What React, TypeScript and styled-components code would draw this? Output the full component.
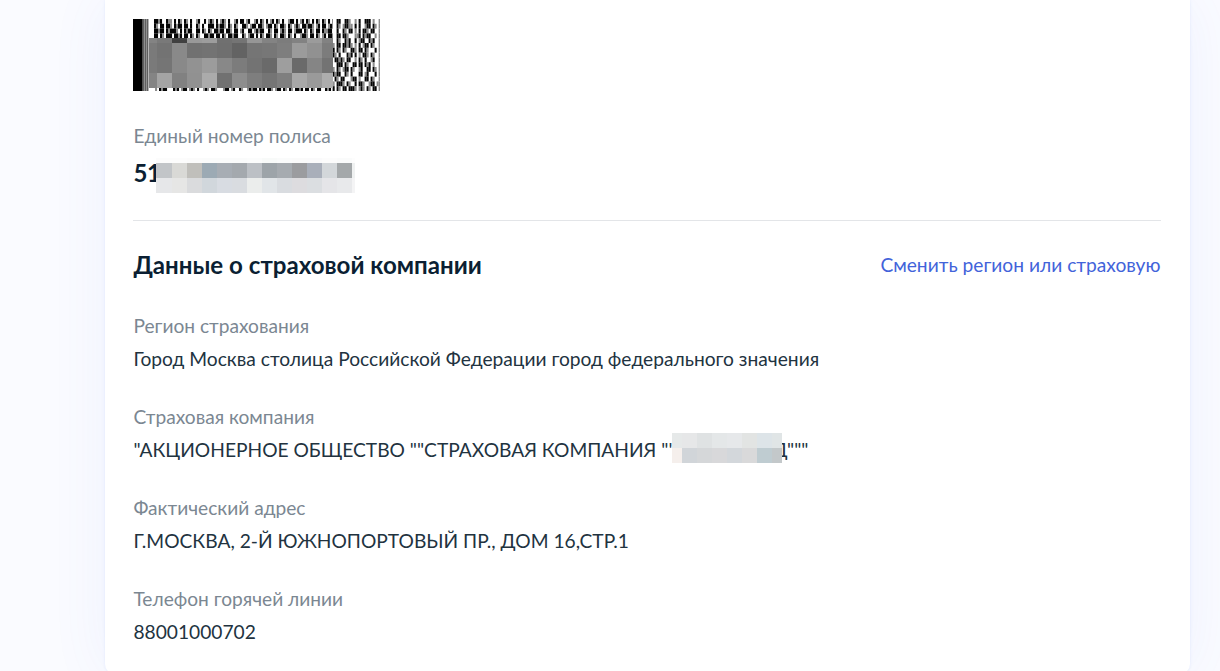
import styled, { createGlobalStyle } from 'styled-components';

const GlobalStyle = createGlobalStyle`
  * {
    box-sizing: border-box;
  }
  body {
    margin: 0;
    height: 671px;
    overflow: hidden;
    background: #fafbff;
    font-family: Lato, 'Open Sans', sans-serif;
    color: #0b1f33;
  }
`;

const Page = styled.main`
  height: 671px;
  padding: 0 30.5px 0 105px;
  overflow: hidden;
`;

const Card = styled.section`
  height: 674px;
  padding: 19px 29px 0 28.4px;
  background: #fff;
  border-radius: 0 0 10px 10px;
  box-shadow: 0 0 60px rgba(80, 120, 240, 0.07), 0 0 3px rgba(80, 120, 240, 0.12);
`;

const Barcode = styled.svg`
  display: block;
  width: 247px;
  height: 72px;
`;

const Label = styled.div`
  height: 24px;
  font-size: 19.15px;
  line-height: 24px;
  color: #7b8792;
  white-space: nowrap;
`;

const Value = styled.div`
  display: flex;
  height: 30px;
  margin-top: 6px;
  font-size: 19.2px;
  line-height: 30px;
  color: #22333f;
  white-space: pre;
`;

const Policy = styled.div`
  height: 130px;
  padding-top: 33px;
  border-bottom: 1px solid #e3e5e8;
`;

const PolicyNumber = styled.div`
  display: flex;
  height: 35px;
  margin-top: 10px;
  font-size: 24px;
  font-weight: 700;
  line-height: 30px;
`;

const PolicyDigits = styled.span`
  width: 22.6px;
  letter-spacing: -0.4px;
`;

const SectionHead = styled.header`
  display: flex;
  justify-content: space-between;
  align-items: center;
  height: 30px;
  margin: 29px 0 34px;
`;

const Title = styled.h2`
  margin: 0;
  font-size: 24.1px;
  font-weight: 700;
  line-height: 30px;
  white-space: nowrap;
`;

const ChangeLink = styled.a`
  font-size: 19.2px;
  line-height: 30px;
  color: #4263da;
  white-space: nowrap;
`;

const Field = styled.div`
  height: 91px;
`;

const Pixels = styled.svg<{ $top?: number; $left?: number }>`
  position: relative;
  z-index: 1;
  flex: none;
  display: block;
  margin-top: ${(props) => props.$top ?? 0}px;
  margin-left: ${(props) => props.$left ?? 0}px;
`;

// Left edge of every mosaic column inside the barcode, last one is the right edge
const CODE_COLS = [16, 24, 39, 54, 69, 84, 99, 114, 129, 144, 159, 174, 189, 200];
const CODE_ROWS = [19, 24, 39, 54, 69];
const CODE_TONES = [
  '83 79 40 99 9d 70 74 96 83 7c 82 9b 82',
  '7a 73 89 71 73 6f 63 75 77 7e 9b 91 7c',
  '7a 75 89 92 9c 88 7c 73 6a 9e 6a 85 73',
  '84 a4 81 91 ab 71 8d 7e 75 7f a8 9a ad',
].map((row) => row.split(' ').map((tone) => `#${tone}${tone}${tone}`));

const POLICY_COLS = [0, 16, 31, 46, 61, 76, 91, 106, 121, 136, 151, 166, 181, 196, 199];
const POLICY_ROWS = [0, 5, 20, 35];
const POLICY_TONES = [
  '#fcfcfc #fcfcfc #fbfbfb #fafbfb #fafbfb #fafbfb #fbfcfc #f8faf9 #fafbfb #fafafa #fafafb #fcfcfc #fafbfb #fdfdfd',
  '#c2c5c8 #d9d9d6 #c0bfbb #9caab4 #a7adb4 #a4a9ae #bcc0c5 #9da4a9 #a6abb0 #9b9c9f #a9afba #d3d7da #a4a8aa #eff1f1',
  '#e6e7e9 #e6e6e5 #dadbdd #d1d7dc #d8dce2 #d9dce0 #ebedec #e1e5e8 #d9dce0 #dddcdf #dbdee1 #e5e5e8 #e8e9eb #f4f4f5',
].map((row) => row.split(' '));

const COMPANY_COLS = [0, 10, 25, 40, 55, 70, 85, 100, 110];
const COMPANY_ROWS = [0, 15, 30];
const COMPANY_TONES = [
  '#e6e9e9 #e6e7e8 #dfe2e3 #e4e7e8 #e6e8ea #e2e4e3 #dde4e8 #e0e5e6',
  '#f5efec #d1d5d9 #d5d7d9 #d8d8da #d3d7db #d9d9da #bfccd1 #c3c8ca',
].map((row) => row.split(' '));

// Module rows, 2px per character: # is black, + is grey
const TOP_ROWS = [
  ' ##+#  #++ # #+ #+ #  +#  # +#+ # +#+ #  +# ## +#  +# #+ # +# #+ #  +## # +# #+ # #+ #+ # +# ',
  ' #+ ## ##+ #+## ## #  #+ #  ### #+##+ #+ #+  ##+ +## ##+ +## #+ ##+ #+ +#+ ##+##+ +# ## +#+ ',
  ' ##+## #+###+ # #+##  ## #+ #+ ##+## ##+ ## +#  ## +#+##  #+ ## +#+ ## +### #+ #+ ## #++## + ',
  ' ## #+ ### ##+# ## #+ #+  ##+## ## #+ ##+##  #+ +## # #+ ##+ #+ ##+ #+ #  +##+ ## #+ +# ##+ ',
];
const BOTTOM_ROW = '   + #+##   #+# +## +#+ #  +#+ ##+   +## +#  #+  +#+## #+# ##+ +## #+ #+ ##+# ## #+ ##  #+#';
const RIGHT_ROWS = [
  '  ##  ##+  + #  ### +  +',
  '  #+ +##++ # #  +## #+ +',
  '  #  #+ ## + # ##+ ##  +',
  '  ## ##+   ++# #+##  + +',
  '  #+  #+#  # +##  #+#  +',
  '+ ## ##+#+ + # +## #+  +',
  '# #+ #+  ##+ ## #+   # +',
  '#+ #   #+# # + ##+ #+  +',
  ' ##+#+ ##  + #+ #  +#  +',
  '  ### #+  ## ## #+# +  +',
  '+ #+ +## #+  +#  ## #+ +',
  '#+##  #+ #   ## +#   # +',
  ' #+ ##   +## +  ## #+  +',
  '+ ###+ #+  # ##+  +## ++',
  '# #+ ## ###+ +#+ #+ ## +',
];

interface IMosaicProps {
  cols: number[];
  rows: number[];
  tones: string[][];
}

const Mosaic = ({ cols, rows, tones }: IMosaicProps) => (
  <g>
    {tones.map((line, r) =>
      line.map((fill, c) => (
        <rect
          key={`${r}-${c}`}
          x={cols[c]}
          y={rows[r]}
          width={cols[c + 1] - cols[c]}
          height={rows[r + 1] - rows[r]}
          fill={fill}
        />
      ))
    )}
  </g>
);

const Modules = ({ rows, x, y }: { rows: string[]; x: number; y: number }) => (
  <g>
    {rows.map((row, r) =>
      row
        .split('')
        .map((char, c) =>
          char === ' ' ? null : (
            <rect
              key={`${r}-${c}`}
              x={x + c * 2}
              y={y + r * 4.8}
              width="2.05"
              height="4.85"
              fill={char === '#' ? '#060606' : '#8c8c8c'}
            />
          )
        )
    )}
  </g>
);

const PolicyCode = () => (
  <Barcode viewBox="0 0 247 72">
    <rect width="247" height="72" fill="#fff" />
    <rect x="9" width="6.5" height="72" fill="#a0a0a0" />
    <rect width="9.5" height="72" fill="#000" />
    {[10.2, 12.2, 14.2].map((x) => (
      <rect key={x} x={x} width="1" height="72" fill="#505050" />
    ))}
    <Modules rows={TOP_ROWS} x={19} y={0} />
    <rect x="200" width="47" height="72" fill="#fff" />
    <Modules rows={[BOTTOM_ROW]} x={16} y={67.2} />
    <Modules rows={RIGHT_ROWS} x={199.6} y={0} />
    <Mosaic cols={CODE_COLS} rows={CODE_ROWS} tones={CODE_TONES} />
  </Barcode>
);

const CompanyStart = styled.span`
  width: 538.6px;
`;

const CompanyTail = styled.span`
  margin-left: -9.6px;
`;

const App = () => (
  <>
    <GlobalStyle />
    <Page>
      <Card>
        <PolicyCode />
        <Policy>
          <Label>Единый номер полиса</Label>
          <PolicyNumber>
            <PolicyDigits>51</PolicyDigits>
            <Pixels width="199" height="35">
              <Mosaic cols={POLICY_COLS} rows={POLICY_ROWS} tones={POLICY_TONES} />
            </Pixels>
          </PolicyNumber>
        </Policy>
        <SectionHead>
          <Title>Данные о страховой компании</Title>
          <ChangeLink>Сменить регион или страховую</ChangeLink>
        </SectionHead>
        <Field>
          <Label>Регион страхования</Label>
          <Value>Город Москва столица Российской Федерации город федерального значения</Value>
        </Field>
        <Field>
          <Label>Страховая компания</Label>
          <Value>
            <CompanyStart>"АКЦИОНЕРНОЕ ОБЩЕСТВО ""СТРАХОВАЯ КОМПАНИЯ ""</CompanyStart>
            <Pixels $top={-2} width="110" height="30">
              <Mosaic cols={COMPANY_COLS} rows={COMPANY_ROWS} tones={COMPANY_TONES} />
            </Pixels>
            <CompanyTail>Д"""</CompanyTail>
          </Value>
        </Field>
        <Field>
          <Label>Фактический адрес</Label>
          <Value>Г.МОСКВА, 2-Й ЮЖНОПОРТОВЫЙ ПР., ДОМ 16,СТР.1</Value>
        </Field>
        <Field>
          <Label>Телефон горячей линии</Label>
          <Value>88001000702</Value>
        </Field>
      </Card>
    </Page>
  </>
);

export default App;
